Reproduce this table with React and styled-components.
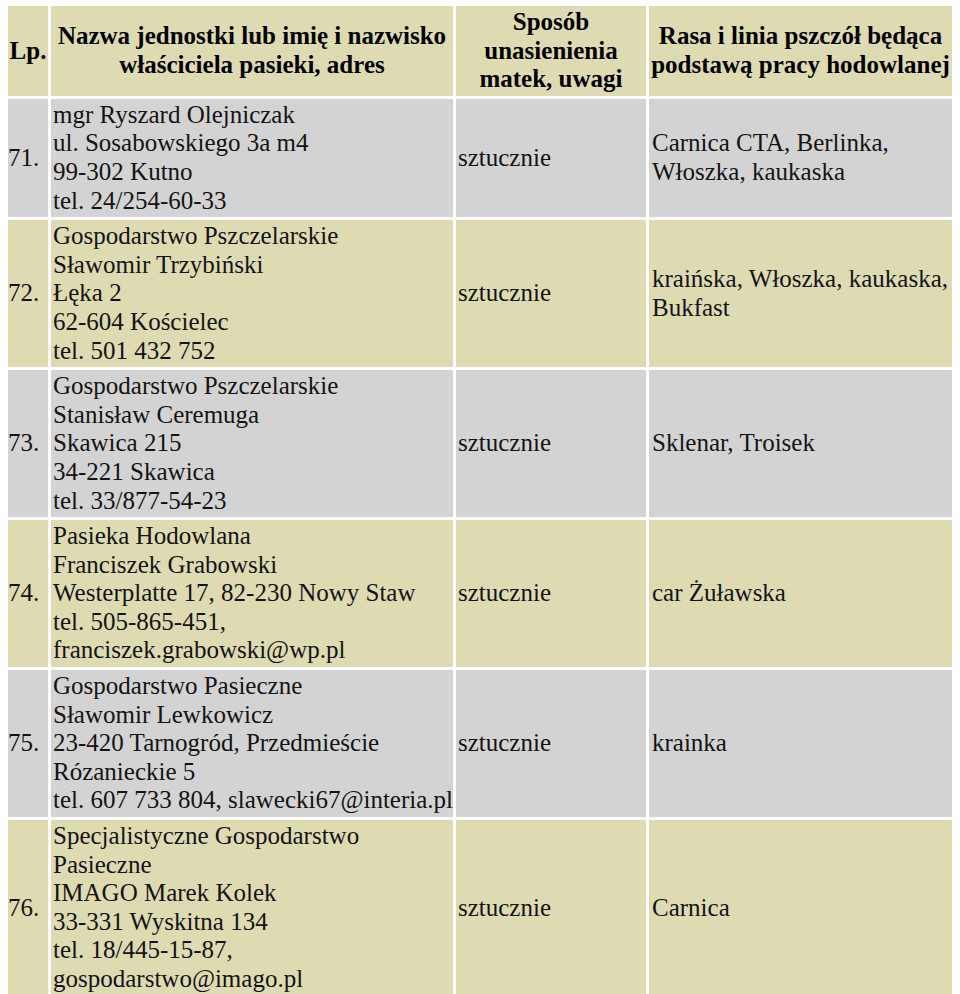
import React from "react";
import styled, { createGlobalStyle } from "styled-components";

const Global = createGlobalStyle`
  html, body { margin: 0; padding: 0; background: #ffffff; }
  body { font-family: "Liberation Serif", "Times New Roman", Times, serif; color: #141414; }
`;

const Page = styled.div`
  padding: 6px 0 0 8px;
  font-family: "Liberation Serif", "Times New Roman", Times, serif;
`;

const Table = styled.div`
  display: grid;
  grid-template-columns: 40px 402px 190px 303px;
  gap: 3px;
  width: 944px;
  background: #ffffff;
`;

const Cell = styled.div`
  display: flex;
  align-items: center;
  justify-content: ${(p) => (p.$head ? "center" : "flex-start")};
  text-align: ${(p) => (p.$head ? "center" : "left")};
  background: ${(p) => (p.$gray ? "#d3d3d3" : "#dedbb3")};
  padding: 2px 0 2px ${(p) => p.$padL ?? 2}px;
  font-family: "Liberation Serif", "Times New Roman", Times, serif;
  font-size: 25px;
  line-height: 28.6px;
  font-weight: ${(p) => (p.$head ? 700 : 400)};
  color: ${(p) => (p.$head ? "#000000" : "#141414")};
  white-space: nowrap;
`;

const Lines = styled.div`
  display: flex;
  flex-direction: column;
`;

const header = [
  { text: ["Lp."] },
  { text: ["Nazwa jednostki lub imię i nazwisko", "właściciela pasieki, adres"] },
  { text: ["Sposób", "unasienienia", "matek, uwagi"] },
  { text: ["Rasa i linia pszczół będąca", "podstawą pracy hodowlanej"] },
];

const rows = [
  {
    lp: "71.",
    name: ["mgr Ryszard Olejniczak", "ul. Sosabowskiego 3a m4", "99-302 Kutno", "tel. 24/254-60-33"],
    method: "sztucznie",
    race: ["Carnica CTA, Berlinka,", "Włoszka, kaukaska"],
  },
  {
    lp: "72.",
    name: ["Gospodarstwo Pszczelarskie", "Sławomir Trzybiński", "Łęka 2", "62-604 Kościelec", "tel. 501 432 752"],
    method: "sztucznie",
    race: ["kraińska, Włoszka, kaukaska,", "Bukfast"],
  },
  {
    lp: "73.",
    name: ["Gospodarstwo Pszczelarskie", "Stanisław Ceremuga", "Skawica 215", "34-221 Skawica", "tel. 33/877-54-23"],
    method: "sztucznie",
    race: ["Sklenar, Troisek"],
  },
  {
    lp: "74.",
    name: ["Pasieka Hodowlana", "Franciszek Grabowski", "Westerplatte 17, 82-230 Nowy Staw", "tel. 505-865-451,", "franciszek.grabowski@wp.pl"],
    method: "sztucznie",
    race: ["car Żuławska"],
  },
  {
    lp: "75.",
    name: ["Gospodarstwo Pasieczne", "Sławomir Lewkowicz", "23-420 Tarnogród, Przedmieście", "Rózanieckie 5", "tel. 607 733 804, slawecki67@interia.pl"],
    method: "sztucznie",
    race: ["krainka"],
  },
  {
    lp: "76.",
    name: ["Specjalistyczne Gospodarstwo", "Pasieczne", "IMAGO Marek Kolek", "33-331 Wyskitna 134", "tel. 18/445-15-87,", "gospodarstwo@imago.pl"],
    method: "sztucznie",
    race: ["Carnica"],
  },
];

const renderLines = (arr) => (
  <Lines>
    {arr.map((l, i) => (
      <span key={i}>{l}</span>
    ))}
  </Lines>
);

export default function App() {
  return (
    <>
      <Global />
      <Page>
        <Table>
          {header.map((h, i) => (
            <Cell key={"h" + i} $head $padL={0}>
              {renderLines(h.text)}
            </Cell>
          ))}
          {rows.map((r, i) => {
            const gray = i % 2 === 0;
            return (
              <React.Fragment key={r.lp}>
                <Cell $gray={gray} $padL={0}>{r.lp}</Cell>
                <Cell $gray={gray} $padL={2}>{renderLines(r.name)}</Cell>
                <Cell $gray={gray} $padL={2}>{r.method}</Cell>
                <Cell $gray={gray} $padL={3}>{renderLines(r.race)}</Cell>
              </React.Fragment>
            );
          })}
        </Table>
      </Page>
    </>
  );
}
